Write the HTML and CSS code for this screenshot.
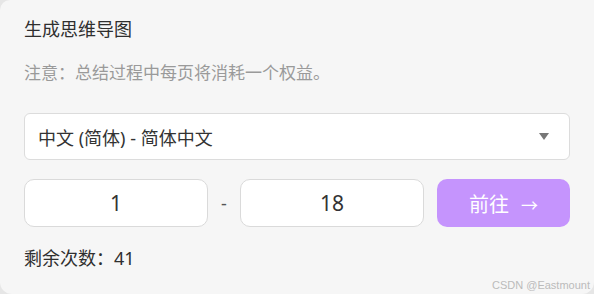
FILE: index.html
```html
<!DOCTYPE html>
<html>
<head>
  <title>生成思维导图</title>
  <link rel="stylesheet" href="styles.css">
</head>
<body>
  <div class="panel">
    <div class="title">生成思维导图</div>
    <div class="note">注意：总结过程中每页将消耗一个权益。</div>

    <div class="select">
      <span>中文 (简体) - 简体中文</span>
      <span class="caret"></span>
    </div>

    <div class="range">
      <input class="page-input" type="text" value="1">
      <span class="dash">-</span>
      <input class="page-input" type="text" value="18">
      <button class="go">前往<span class="arrow">→</span></button>
    </div>

    <div class="count">剩余次数：41</div>
    <div class="mark">CSDN @Eastmount</div>
  </div>
</body>
</html>
```

FILE: styles.css
```css
html, body {
  margin: 0;
  background-color: #e6e6e6;
}

body {
  font-family: "Noto Sans", "Noto Sans CJK SC", sans-serif;
  color: #333;
}

.panel {
  position: relative;
  height: 294px;
  box-sizing: border-box;
  padding: 17px 24px 0 24px;
  background-color: #f6f6f6;
  border-radius: 10px 0 12px 12px;
}

.title {
  font-size: 18px;
  line-height: 24px;
  color: #2f2f2f;
}

.note {
  margin-top: 20px;
  font-size: 17px;
  line-height: 24px;
  color: #9a9a9a;
}

.select {
  display: flex;
  align-items: center;
  justify-content: space-between;
  margin-top: 28px;
  height: 47px;
  box-sizing: border-box;
  padding: 0 20px 0 13px;
  background-color: #fff;
  border: 1px solid #dcdcdc;
  border-radius: 6px;
  font-size: 18px;
  color: #333;
}

.caret {
  width: 0;
  height: 0;
  border-left: 5px solid transparent;
  border-right: 5px solid transparent;
  border-top: 7px solid #777;
}

.range {
  display: flex;
  align-items: center;
  margin-top: 19px;
  height: 48px;
}

.page-input {
  width: 184px;
  height: 48px;
  box-sizing: border-box;
  border: 1px solid #dadada;
  border-radius: 10px;
  background-color: #fff;
  text-align: center;
  font-family: inherit;
  font-size: 21px;
  color: #333;
  outline: none;
}

.dash {
  width: 32px;
  text-align: center;
  font-size: 18px;
  color: #555;
}

.go {
  flex: 1;
  margin-left: 13px;
  height: 48px;
  border: none;
  border-radius: 10px;
  background-color: #c594fd;
  color: #fff;
  font-family: inherit;
  font-size: 20px;
  cursor: pointer;
}

.arrow {
  margin-left: 12px;
  font-size: 17px;
}

.count {
  margin-top: 19px;
  font-size: 18px;
  line-height: 24px;
  color: #2f2f2f;
}

.mark {
  position: absolute;
  right: 4px;
  bottom: 3px;
  font-family: "Liberation Sans", sans-serif;
  font-size: 11px;
  color: #bbb;
}
```
